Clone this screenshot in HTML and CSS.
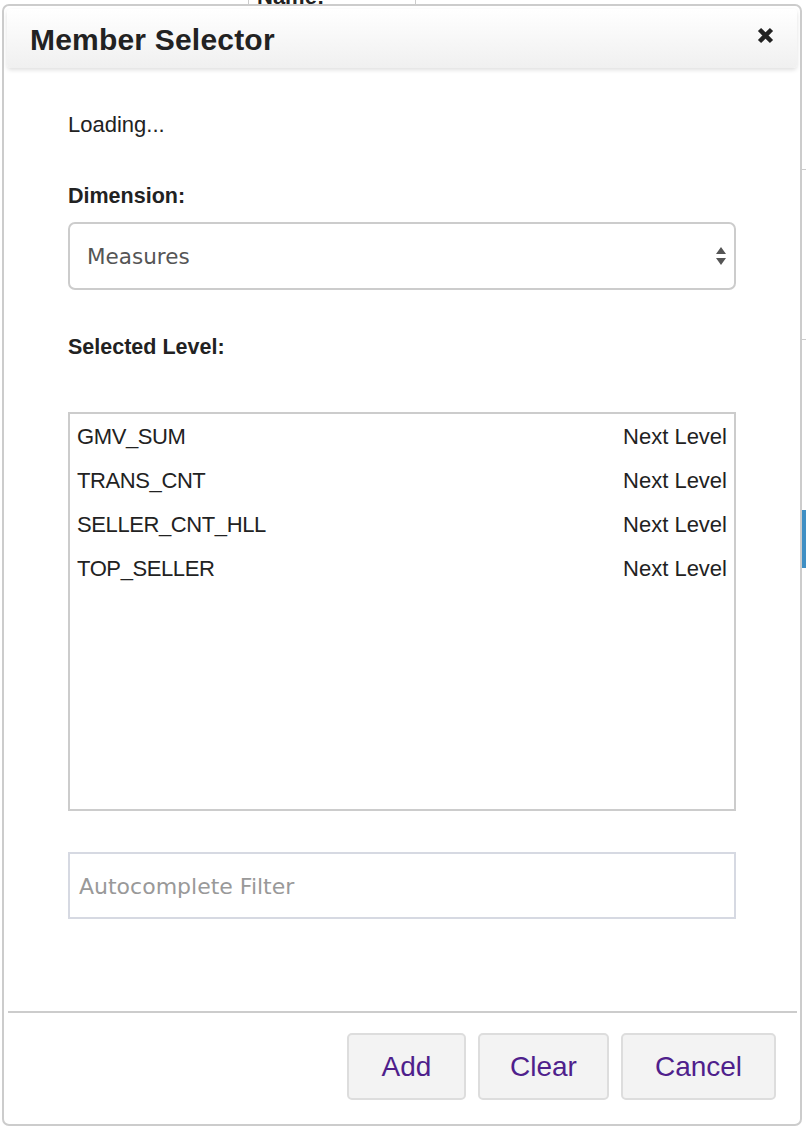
FILE: index.html
```html
<!DOCTYPE html>
<html>
<head>
<meta charset="utf-8">
<link rel="stylesheet" href="styles.css">
</head>
<body>
<div class="page">
  <div class="page-top">
    <div class="cell-gap"></div>
    <div class="cell-name"><span>Name:</span></div>
  </div>
  <div class="page-side">
    <div class="side-row"></div>
    <div class="side-row"></div>
    <div class="side-btn"></div>
  </div>
</div>

<div class="dialog">
  <div class="dialog-header">
    <h1 class="dialog-title">Member Selector</h1>
    <span class="close" aria-label="close">
      <svg width="17" height="17" viewBox="0 0 17 17"><path d="M2.5 2.5 L14.5 14.5 M14.5 2.5 L2.5 14.5" stroke="#222" stroke-width="4.5" stroke-linecap="butt"/></svg>
    </span>
  </div>

  <div class="dialog-body">
    <div class="loading">Loading...</div>

    <div class="label label-dim">Dimension:</div>
    <div class="select">
      <span class="select-text">Measures</span>
      <svg class="select-arrows" width="10" height="20" viewBox="0 0 10 20"><path d="M5 1 L10 8 L0 8 Z M0 12 L10 12 L5 19 Z" fill="#555"/></svg>
    </div>

    <div class="label label-level">Selected Level:</div>
    <div class="listbox">
      <div class="item"><span class="name">GMV_SUM</span><span>Next Level</span></div>
      <div class="item"><span class="name">TRANS_CNT</span><span>Next Level</span></div>
      <div class="item"><span class="name">SELLER_CNT_HLL</span><span>Next Level</span></div>
      <div class="item"><span class="name">TOP_SELLER</span><span>Next Level</span></div>
    </div>

    <div class="filter"><span class="placeholder">Autocomplete Filter</span></div>
  </div>

  <div class="dialog-footer">
    <button class="btn btn-add">Add</button>
    <button class="btn btn-clear">Clear</button>
    <button class="btn btn-cancel">Cancel</button>
  </div>
</div>
</body>
</html>
```

FILE: styles.css
```css
* { box-sizing: border-box; }

html, body {
  margin: 0;
  padding: 0;
  width: 806px;
  height: 1128px;
  overflow: hidden;
  background: #fff;
  font-family: "Liberation Sans", Arial, sans-serif;
  color: #222;
}

.page {
  position: relative;
  width: 806px;
  height: 1128px;
}

.page-top {
  display: flex;
  height: 40px;
}

.cell-gap { width: 248px; }

.cell-name {
  width: 168px;
  border-left: 1px solid #ccc;
  border-right: 1px solid #ccc;
  overflow: hidden;
}

.cell-name span {
  display: block;
  margin-top: -16px;
  margin-left: 8px;
  font-weight: bold;
  font-size: 22px;
  color: #222;
}

.page-side {
  position: absolute;
  right: 0;
  top: 0;
  width: 6px;
  height: 1128px;
  display: flex;
  flex-direction: column;
}

.side-row {
  height: 170px;
  border-bottom: 1px solid #ccc;
}

.side-btn {
  margin-top: 170px;
  height: 58px;
  background: #3f8fc4;
}

.dialog {
  position: absolute;
  left: 2px;
  top: 4px;
  width: 800px;
  height: 1122px;
  background: #fff;
  border: 2px solid #cccccc;
  border-radius: 7px;
  display: flex;
  flex-direction: column;
}

.dialog-header {
  margin: 3px 3px 0 3px;
  height: 59px;
  display: flex;
  align-items: center;
  justify-content: space-between;
  padding: 0 23px 0 23px;
  background: linear-gradient(#ffffff, #f0f0f0);
  border-radius: 4px;
  box-shadow: 0 2px 4px rgba(0, 0, 0, 0.13);
}

.dialog-title {
  margin: 0;
  font-size: 30px;
  font-weight: bold;
  color: #222;
  padding-top: 3px;
  letter-spacing: 0.2px;
}

.close {
  display: flex;
  width: 17px;
  height: 17px;
  margin-top: -6px;
}

.dialog-body {
  padding: 0 64px;
  display: flex;
  flex-direction: column;
  flex: 1;
}

.loading {
  margin-top: 44px;
  font-size: 22px;
  line-height: 26px;
  color: #222;
}

.label {
  font-weight: bold;
  font-size: 21.5px;
  line-height: 26px;
  color: #222;
}

.label-dim { margin-top: 45px; }
.label-level { margin-top: 44px; }

.select {
  margin-top: 13px;
  height: 68px;
  border: 2px solid #cccccc;
  border-radius: 7px;
  display: flex;
  align-items: center;
  justify-content: space-between;
  padding: 0 8px 0 17px;
}

.select-text {
  font-family: "DejaVu Sans", sans-serif;
  font-size: 21.5px;
  color: #555;
}

.listbox {
  margin-top: 52px;
  height: 399px;
  border: 2px solid #cccccc;
  display: flex;
  flex-direction: column;
}

.item {
  height: 44px;
  display: flex;
  align-items: center;
  justify-content: space-between;
  padding: 1px 7px 0 7px;
  font-size: 22px;
  color: #222;
}

.item .name {
  letter-spacing: -0.4px;
}

.filter {
  margin-top: 41px;
  height: 67px;
  border: 2px solid #d6d9e2;
  display: flex;
  align-items: center;
  padding: 2px 0 0 9px;
}

.placeholder {
  font-family: "DejaVu Sans", sans-serif;
  font-size: 22px;
  color: #999;
}

.dialog-footer {
  margin: 0 3px 0 4px;
  border-top: 2px solid #cccccc;
  padding: 20px 21px 24px 0;
  display: flex;
  justify-content: flex-end;
  gap: 12px;
}

.btn {
  height: 67px;
  background: #f3f3f3;
  border: 2px solid #dddddd;
  border-radius: 5px;
  font-family: "Liberation Sans", Arial, sans-serif;
  font-size: 28px;
  color: #4f1f8c;
  padding: 0;
}

.btn-add { width: 119px; }
.btn-clear { width: 131px; }
.btn-cancel { width: 155px; }
```
